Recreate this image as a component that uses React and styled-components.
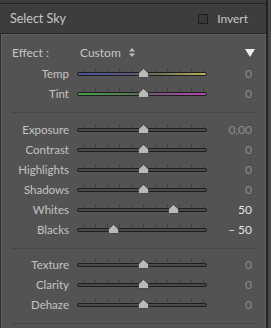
import React from 'react'
import styled, { createGlobalStyle } from 'styled-components'

const Global = createGlobalStyle`
  html, body {
    margin: 0;
    padding: 0;
    background: #474747;
    font-family: Lato, "Liberation Sans", sans-serif;
  }
`

const Frame = styled.div`
  width: 266px;
  height: 328px;
  border-right: 2px solid #232323;
  display: flex;
  flex-direction: column;
  overflow: hidden;
`

const TopBand = styled.div`
  height: 3px;
  background: #3c3c3c;
  border-bottom: 1px solid #222;
`

const Header = styled.div`
  height: 29px;
  background: #3d3d3d;
  border-bottom: 1px solid #262626;
  display: flex;
  align-items: center;
  padding: 0 18px 0 10px;
  color: #c6c6c6;
  font-size: 12.5px;
`

const Title = styled.div`
  flex: 1;
`

const CheckBox = styled.span`
  width: 8px;
  height: 8px;
  border: 1px solid #1c1c1c;
  background: #3a3a3a;
  margin-right: 9px;
`

const Invert = styled.span`
  font-size: 12px;
`

const Panel = styled.div`
  flex: 1;
  background: #535353;
  border-left: 1px solid #2c2c2c;
  box-shadow: inset 1px 1px 0 #616161, inset -1px 0 0 #5e5e5e;
  padding-top: 8px;
`

const Section = styled.div`
  padding: ${p => p.$top || 0}px 0 9px;
`

const Divider = styled.div`
  height: 1px;
  margin: 0 11px 0 11px;
  background: #474747;
`

const EffectRow = styled.div`
  height: 21px;
  display: flex;
  align-items: center;
  padding: 0 11px 0 11px;
  color: #c6c6c6;
  font-size: 12px;
`

const EffectLabel = styled.span`
  width: 68px;
`

const EffectValue = styled.span`
  flex: 1;
  display: flex;
  align-items: center;
  gap: 8px;
`

const Row = styled.div`
  height: 20px;
  display: flex;
  align-items: center;
  font-size: 11.5px;
`

const Label = styled.span`
  width: 68px;
  text-align: right;
  color: #c4c4c4;
`

const Slider = styled.div`
  position: relative;
  width: 130px;
  height: 20px;
  margin-left: 8px;
  &::before {
    content: '';
    position: absolute;
    left: 0;
    right: 0;
    top: 5px;
    height: 3px;
    background: repeating-linear-gradient(to right, transparent 0 6px, #3e3e3e 6px 7px, transparent 7px 12px);
  }
`

const Track = styled.div`
  position: absolute;
  left: 0;
  right: 0;
  top: 9px;
  height: 2px;
  border: 1px solid #1d1d1d;
  border-radius: 2px;
  background: ${p => p.$fill || '#4a4a4a'};
`

const Thumb = styled.svg`
  position: absolute;
  top: 5px;
  width: 11px;
  height: 10px;
  margin-left: -5.5px;
`

const Value = styled.span`
  width: 45px;
  text-align: right;
  color: ${p => (p.$bright ? '#e4e4e4' : '#8d8d8d')};
  font-size: 12px;
`

function SliderRow({ label, value = 0, text = '0', fill, bright }) {
  const x = 66 + value * 0.6
  return (
    <Row>
      <Label>{label}</Label>
      <Slider>
        <Track $fill={fill} />
        <Thumb viewBox="0 0 11 10" style={{ left: x }}>
          <path d="M5.5 0.5 L10.5 5 L10.5 8.5 Q10.5 9.5 9.5 9.5 L1.5 9.5 Q0.5 9.5 0.5 8.5 L0.5 5 Z" fill="#b9b9b9" stroke="#3a3a3a" strokeWidth="0.8" />
        </Thumb>
      </Slider>
      <Value $bright={bright}>{text}</Value>
    </Row>
  )
}

export default function App() {
  return (
    <>
      <Global />
      <Frame>
        <TopBand />
        <Header>
          <Title>Select Sky</Title>
          <CheckBox />
          <Invert>Invert</Invert>
        </Header>
        <Panel>
          <Section>
            <EffectRow>
              <EffectLabel>Effect :</EffectLabel>
              <EffectValue>
                Custom
                <svg width="6" height="9" viewBox="0 0 6 9">
                  <path d="M3 0 L6 3.5 L0 3.5 Z M0 5.5 L6 5.5 L3 9 Z" fill="#bdbdbd" />
                </svg>
              </EffectValue>
              <svg width="10" height="8" viewBox="0 0 10 8">
                <path d="M0 0 L10 0 L5 8 Z" fill="#ececec" />
              </svg>
            </EffectRow>
            <SliderRow label="Temp" fill="linear-gradient(to right, #4f4fa3, #58587e 40%, #6e6e58 60%, #b2b25a)" />
            <SliderRow label="Tint" fill="linear-gradient(to right, #46a046, #587858 40%, #785878 60%, #b444b4)" />
          </Section>
          <Divider />
          <Section $top={6}>
            <SliderRow label="Exposure" text="0,00" />
            <SliderRow label="Contrast" />
            <SliderRow label="Highlights" />
            <SliderRow label="Shadows" />
            <SliderRow label="Whites" value={50} text="50" bright />
            <SliderRow label="Blacks" value={-50} text="– 50" bright />
          </Section>
          <Divider />
          <Section $top={5}>
            <SliderRow label="Texture" />
            <SliderRow label="Clarity" />
            <SliderRow label="Dehaze" />
          </Section>
          <Divider />
        </Panel>
      </Frame>
    </>
  )
}
